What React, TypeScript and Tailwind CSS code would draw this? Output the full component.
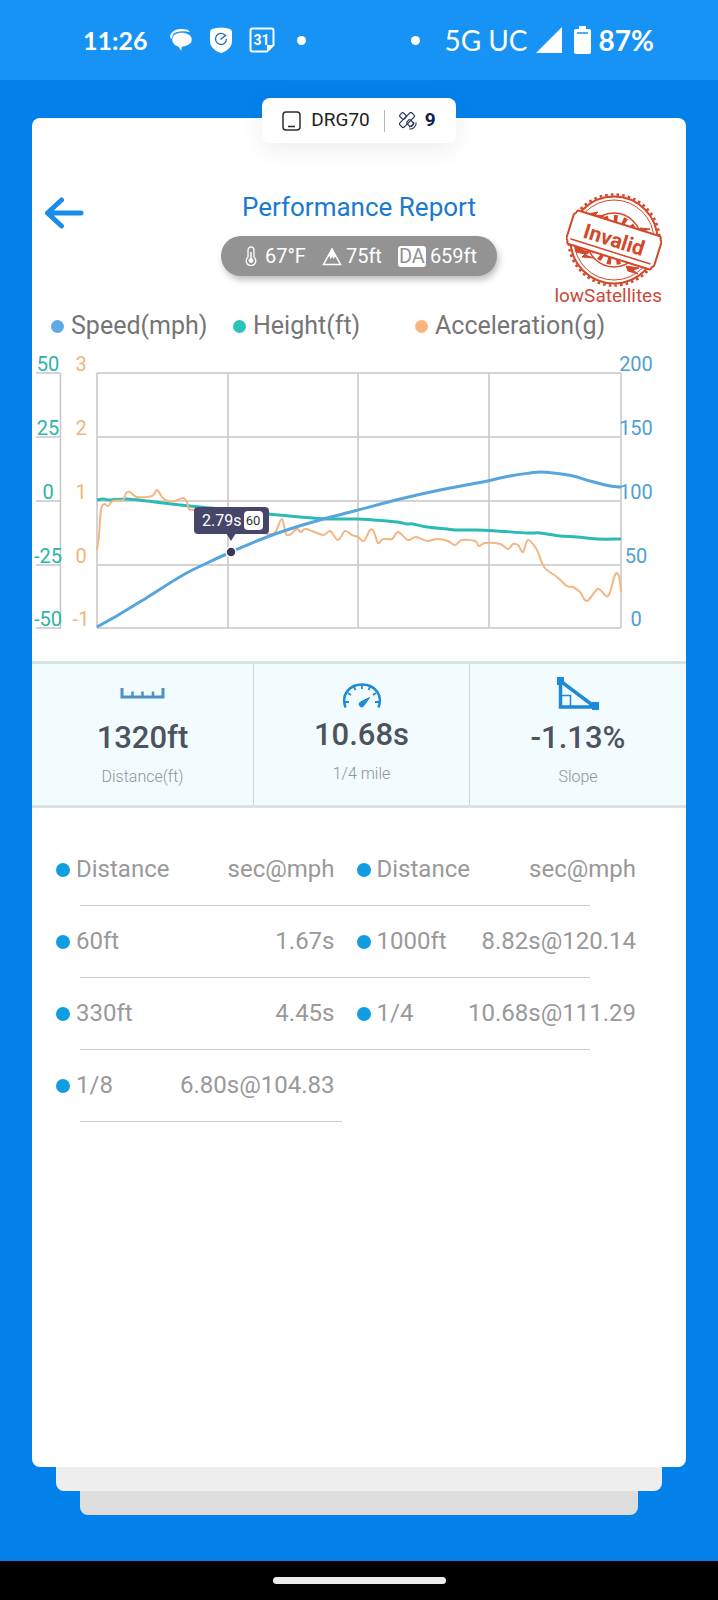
import type { ReactNode } from "react";

type Point = [number, number];

// Curve samples in the chart's own coordinate space.
const SPEED: Point[] = [
  [65, 277], [88, 264], [111, 250], [151, 225], [175, 213], [199, 202], [235, 187], [261, 178],
  [295, 168], [326, 160], [368, 149], [408, 140], [445, 133], [478, 126], [498, 123], [508, 122],
  [521, 123], [541, 126], [558, 131], [578, 136], [589, 137],
];

const HEIGHT: Point[] = [
  [65, 150], [71, 149], [78, 150], [95, 149], [115, 151], [131, 153], [168, 157], [200, 160],
  [236, 164], [268, 167], [295, 169], [326, 169], [341, 170], [365, 172], [375, 174], [381, 174],
  [395, 177], [415, 179], [423, 180], [445, 180], [465, 181], [495, 183], [508, 183], [528, 186],
  [545, 187], [565, 189], [589, 189],
];

const ACCELERATION: Point[] = [
  [65, 200], [67, 185], [69, 160], [72, 154], [76, 156], [81, 151], [91, 150], [94, 143],
  [98, 142], [105, 147], [120, 146], [125, 140], [130, 147], [136, 151], [143, 151], [151, 148],
  [155, 152], [157, 159], [163, 160], [200, 165], [230, 182], [240, 184], [244, 181], [250, 169],
  [254, 184], [259, 184], [265, 179], [269, 182], [274, 179], [291, 185], [298, 181], [306, 190],
  [313, 181], [320, 185], [326, 187], [332, 191], [338, 180], [342, 182], [346, 193], [351, 189],
  [360, 189], [366, 182], [376, 190], [384, 187], [395, 191], [405, 189], [416, 191], [423, 195],
  [430, 190], [443, 191], [447, 196], [453, 193], [468, 194], [476, 199], [481, 194], [486, 195],
  [491, 202], [496, 190], [505, 200], [512, 217], [525, 227], [535, 236], [541, 237], [548, 242],
  [555, 251], [566, 239], [576, 246], [583, 225], [587, 226], [589, 242],
];

const GRID_X = [65, 196, 326, 457, 589];
const GRID_Y = [23, 87, 151, 215, 278];
const AXES = [
  { x: 16, className: "fill-[#2bb5a8]", labels: ["50", "25", "0", "-25", "-50"] },
  { x: 49, className: "fill-[#efb67c]", labels: ["3", "2", "1", "0", "-1"] },
  { x: 604, className: "fill-[#4f9fd0]", labels: ["200", "150", "100", "50", "0"] },
];

const SPLITS = [
  ["60ft", "1.67s", "1000ft", "8.82s@120.14"],
  ["330ft", "4.45s", "1/4", "10.68s@111.29"],
  ["1/8", "6.80s@104.83"],
];

/** Smooth line through the points (Catmull-Rom converted to beziers). */
function smooth(points: Point[]) {
  let d = `M${points[0][0]} ${points[0][1]}`;
  for (let i = 0; i < points.length - 1; i++) {
    const p0 = points[i - 1] ?? points[i];
    const p1 = points[i];
    const p2 = points[i + 1];
    const p3 = points[i + 2] ?? p2;
    d += `C${p1[0] + (p2[0] - p0[0]) / 6} ${p1[1] + (p2[1] - p0[1]) / 6} ${p2[0] - (p3[0] - p1[0]) / 6} ${p2[1] - (p3[1] - p1[1]) / 6} ${p2[0]} ${p2[1]}`;
  }
  return d;
}

function StatusBar() {
  return (
    <div className="flex h-20 items-center justify-between bg-[#1693f5] pr-16 pl-[83px] font-[Lato,sans-serif] text-[28px] leading-8 text-white">
      <div className="flex items-center">
        <span className="text-[25px] font-bold">11:26</span>
        <svg className="ml-[22px] h-6 w-6" viewBox="0 0 24 24" fill="currentColor">
          <path d="M1 8C3 2 8 1 13 1c4 0 7 1 8 3-5-1-9-1-13 0C4 5 3 8 3 11 1 10 1 9 1 8z" />
          <path d="M12.500 4.500c6 0 10.500 3 10.500 7 0 4-4 6.500-10 7.500l-.5 4.500-3-4.500C5 17.500 3 14.500 3 11.500c0-4 4-7 9.500-7z" stroke="#1693f5" strokeWidth="0.500" />
        </svg>
        <svg className="ml-4 h-[26px] w-6" viewBox="0 0 24 26">
          <path d="M3 2Q12-1 21 2l2 2v10c0 6-5 10-11 12C6 24 1 20 1 14V4z" fill="currentColor" />
          <path d="M16.500 8.800A5.500 5.500 0 1 0 17.500 12" fill="none" stroke="#1d6fb8" strokeWidth="1.300" />
          <path d="M11.500 12.500 17 8" stroke="#1d6fb8" strokeWidth="1.500" />
        </svg>
        <svg className="ml-4 h-[26px] w-[26px]" viewBox="0 0 26 26">
          <path d="M3.500 1.500h19q2 0 2 2V18l-6.500 6.500H3.500q-2 0-2-2v-19q0-2 2-2z" fill="none" stroke="currentColor" strokeWidth="2" />
          <path d="M18 24.500V18h6.500z" fill="currentColor" />
          <text x="12.500" y="18" textAnchor="middle" className="fill-white font-[Roboto,sans-serif] text-[14px] font-bold">31</text>
        </svg>
        <span className="ml-[22px] h-[9px] w-[9px] rounded-full bg-white" />
      </div>
      <div className="flex items-center">
        <span className="mr-6 h-[9px] w-[9px] rounded-full bg-white" />
        <span>5G UC</span>
        <svg className="ml-2 h-[26px] w-[26px]" viewBox="0 0 26 26" fill="currentColor">
          <path d="M26 0v26H0z" />
        </svg>
        <svg className="mr-2 ml-3 h-7 w-[17px]" viewBox="0 0 17 28">
          <path d="M5 0h7v3h3q2 0 2 2v21q0 2-2 2H2q-2 0-2-2V5q0-2 2-2h3z" fill="currentColor" />
          <path d="M3 7h11" stroke="#1693f5" strokeWidth="1.500" />
        </svg>
        <span className="font-bold">87%</span>
      </div>
    </div>
  );
}

function DeviceChip() {
  return (
    <div className="mx-auto -mt-5 flex h-[45px] items-center rounded-lg bg-white px-5 text-[19px] text-[#222] shadow-[0_6px_24px_rgba(30,40,80,0.08)]">
      <svg className="h-5 w-[19px]" viewBox="0 0 19 20" fill="none" stroke="#2c2c34" strokeWidth="1.500">
        <rect x="1" y="1" width="17" height="18" rx="3" />
        <path d="M6 15.500h7" />
      </svg>
      <span className="ml-2.5">DRG70</span>
      <span className="mx-[14px] h-[22px] w-px bg-[#b5b5b5]" />
      <svg className="h-[18px] w-[18px]" viewBox="0 0 18 18" fill="none" stroke="#24365f" strokeWidth="1.200">
        <rect x="-2.500" y="-3" width="5" height="6" rx="1.500" transform="translate(4 4) rotate(-45)" />
        <rect x="-2.500" y="-3" width="5" height="6" rx="1.500" transform="translate(11 11) rotate(-45)" />
        <rect x="-3" y="-8.500" width="6" height="17" rx="1.800" transform="translate(8 8) rotate(45)" />
        <path d="M10.500 17.200c3.800 0 6.700-2.700 6.700-6.700M10 14.800c2.800 0 4.800-2 4.800-4.800" />
      </svg>
      <span className="ml-2 font-bold text-[#101c52]">9</span>
    </div>
  );
}

function InvalidStamp() {
  const red = "#d4482a";
  return (
    <svg className="h-24 w-24" viewBox="0 0 96 96" fill="none" stroke={red}>
      <circle cx="48" cy="48" r="45.500" strokeWidth="2.500" strokeDasharray="2.600 3.100" />
      <circle cx="48" cy="48" r="43.500" strokeWidth="2" />
      <circle cx="48" cy="48" r="40" strokeWidth="1" />
      <circle cx="48" cy="48" r="27" strokeWidth="1.500" />
      <circle cx="48" cy="48" r="20" strokeWidth="10" strokeDasharray="3.500 5" />
      <path d="M22 22l10-2-3 3 9 1-8 3 7 3-14-2 3-3zM74 36l10 1-7 2 8 4-13-1zM9 54l12 1-6 3 9 2-5 3 9 3-12-1 3-3-9-2zM60 74l13 2-6 2 5 4-10-3z" fill={red} strokeWidth="1" />
      <g transform="translate(48 48) rotate(17.500)">
        <path d="M-44-15.500q0-2 2-2h84q2 0 2 2c0 2 2 2 2 3v25c0 1-2 1-2 3s-1 2-2 2h-84q-2 0-2-2c0-2-2-2-2-3v-25c0-1 2-1 2-3z" className="fill-white" strokeWidth="2" />
        <path d="M-42 12h84" strokeWidth="1.500" />
        <text y="7" textAnchor="middle" fill={red} stroke="none" className="text-[21px] font-bold">Invalid</text>
      </g>
    </svg>
  );
}

function Header() {
  return (
    <header className="mt-12 grid grid-cols-[1fr_auto_1fr] items-start">
      <button type="button" aria-label="Back" className="mt-1.5 ml-3 w-10 text-[#1b8ce8]">
        <svg className="h-8 w-10" viewBox="0 0 40 32" fill="none" stroke="currentColor" strokeWidth="5" strokeLinecap="round" strokeLinejoin="round">
          <path d="M17.500 3 3.500 16l14 13M4 16h33" />
        </svg>
      </button>
      <div className="flex flex-col items-center">
        <h1 className="text-[26px] leading-8 text-[#1a7ad0]">Performance Report</h1>
        <div className="mt-[13px] flex h-10 items-center rounded-full bg-[#939393] px-5 text-[20px] text-white shadow-[2px_4px_6px_rgba(0,0,0,0.25)]">
          <svg className="ml-1 h-5 w-3" viewBox="0 0 12 20" fill="none" stroke="currentColor">
            <path d="M3 11V4a3 3 0 0 1 6 0v7a4.800 4.800 0 1 1-6 0z" strokeWidth="1.300" />
            <path d="M6 6v8" strokeWidth="1.500" />
            <circle cx="6" cy="14.500" r="2" fill="currentColor" />
          </svg>
          <span className="ml-2">67°F</span>
          <svg className="ml-4 h-[19px] w-5" viewBox="0 0 20 19" fill="none" stroke="currentColor">
            <path d="M10 2 1.500 17.500h17z" strokeWidth="1.500" />
            <path d="M10 1 5.500 10l2-1 1 3 2-2.500 1 2.500 1.500-2.500 1.500 1z" fill="currentColor" stroke="none" />
          </svg>
          <span className="ml-1">75ft</span>
          <span className="ml-4 rounded-[3px] bg-white px-px leading-[21px] text-[#939393]">DA</span>
          <span className="ml-1">659ft</span>
        </div>
      </div>
      <div className="mt-px mr-6 flex flex-col items-end">
        <InvalidStamp />
        <span className="-mt-1 text-[19px] leading-6 text-[#c94a38]">lowSatellites</span>
      </div>
    </header>
  );
}

function LegendItem({ color, label }: { color: string; label: string }) {
  return (
    <li className="flex items-center gap-[7px]">
      <span className={`h-[13px] w-[13px] rounded-full ${color}`} />
      {label}
    </li>
  );
}

function Chart() {
  return (
    <svg className="mt-2 w-full" viewBox="0 0 654 290" fill="none" role="img" aria-label="Speed, height and acceleration over time">
      <g stroke="#c6c6c6" strokeWidth="1.500">
        {GRID_X.map((x) => (
          <path key={x} d={`M${x} 23V278`} />
        ))}
        {GRID_Y.map((y) => (
          <path key={y} d={`M65 ${y}H589M4 ${y}H28`} />
        ))}
        <path d="M28.500 23V279" />
      </g>
      {AXES.map((axis) => (
        <g key={axis.x} textAnchor="middle" className={`text-[20px] ${axis.className}`}>
          {axis.labels.map((label, i) => (
            <text key={label} x={axis.x} y={GRID_Y[i] - 2}>
              {label}
            </text>
          ))}
        </g>
      ))}
      <path d={smooth(HEIGHT)} stroke="#2dbab4" strokeWidth="3" />
      <path d={smooth(ACCELERATION)} stroke="#f2b683" strokeWidth="2" />
      <path d={smooth(SPEED)} stroke="#56a5dc" strokeWidth="3" />

      <rect x="162" y="157" width="75" height="27" rx="4" fill="#47466a" />
      <path d="M194 183h10l-5 8z" fill="#47466a" />
      <text x="170" y="176" className="fill-white text-[16px]">2.79s</text>
      <rect x="212" y="161" width="19" height="19" rx="4" fill="#fff" />
      <text x="221" y="175" textAnchor="middle" className="fill-[#333] text-[13px]">60</text>
      <circle cx="199" cy="202" r="5" fill="#393858" stroke="#fff" strokeWidth="1.500" />
    </svg>
  );
}

function Stat({ icon, value, label }: { icon: ReactNode; value: string; label: string }) {
  return (
    <div className="flex flex-col items-center pt-3 pb-4">
      {icon}
      <p className="mt-2 text-[31px] leading-9 font-medium text-[#4c535e]">{value}</p>
      <p className="mt-[9px] text-base leading-6 font-light text-[#8f9499]">{label}</p>
    </div>
  );
}

function RulerIcon() {
  return (
    <svg className="h-9 w-[45px]" viewBox="0 0 45 36" fill="none" stroke="#4e90c8">
      <path d="M2 12v9h41v-9" strokeWidth="3" />
      <path d="M12.500 15.500v5M22.500 15.500v5M33 15.500v5" strokeWidth="2.500" />
    </svg>
  );
}

function GaugeIcon() {
  return (
    <svg className="h-[33px] w-10" viewBox="0 0 40 33" fill="none" stroke="#1b8ad8">
      <path d="M3.500 31.500C-1.500 17 9 8.500 20 8.500S41.500 17 36.500 31.500" strokeWidth="2.500" />
      <path d="M20 9v4M12 11l1.500 3M28 11l-1.500 3M6 17l3 2M34 17l-3 2M3 26h4M37 26h-4" strokeWidth="1.800" />
      <path d="M27.500 21.500 22 29.500a2.600 2.600 0 1 1-3.500-3.500z" fill="#1b8ad8" strokeWidth="1" />
    </svg>
  );
}

function SlopeIcon() {
  return (
    <svg className="h-9 w-[42px]" viewBox="0 0 42 36" fill="none" stroke="#1b8ad8">
      <path d="M3.500 5v26H38z" strokeWidth="3.500" />
      <path d="M5 19.500h8.500V30" strokeWidth="1.500" />
      <path d="M0 1h7v8H0zM35 26h7v8h-7z" fill="#1b8ad8" stroke="none" />
    </svg>
  );
}

function Dot() {
  return <span className="h-[14px] w-[14px] shrink-0 rounded-full bg-[#109de2]" />;
}

const rowClass =
  "grid grid-cols-[110px_minmax(0,1fr)_133px_minmax(0,1fr)] after:col-span-4 after:ml-6 after:h-px after:bg-[#cdcdcd]";
const labelClass = "flex items-center gap-1.5 text-left leading-[71px] font-normal";
const valueClass = "text-right leading-[71px] font-normal whitespace-nowrap";

function SplitTable() {
  return (
    <table className="mt-[26px] mr-[50px] ml-6 block text-[24px] text-[#999]">
      <thead className="block">
        <tr className={`${rowClass} after:mr-[46px]`}>
          <th className={labelClass}><Dot />Distance</th>
          <th className={valueClass}>sec@mph</th>
          <th className={`${labelClass} pl-[22px]`}><Dot />Distance</th>
          <th className={valueClass}>sec@mph</th>
        </tr>
      </thead>
      <tbody className="block">
        {SPLITS.map(([distance, time, distance2, time2]) => (
          <tr key={distance} className={`${rowClass} ${distance2 ? "after:mr-[46px]" : "after:mr-[294px]"}`}>
            <td className={labelClass}><Dot />{distance}</td>
            <td className={valueClass}>{time}</td>
            {distance2 && (
              <>
                <td className={`${labelClass} pl-[22px]`}><Dot />{distance2}</td>
                <td className={valueClass}>{time2}</td>
              </>
            )}
          </tr>
        ))}
      </tbody>
    </table>
  );
}

export default function App() {
  return (
    <div className="flex min-h-screen flex-col bg-[#0381ea] font-[Roboto,sans-serif]">
      <StatusBar />
      <main className="flex flex-1 flex-col px-8 pt-[38px] pb-[46px]">
        <div className="flex flex-1 flex-col rounded-lg bg-white">
          <DeviceChip />
          <Header />
          <ul className="mt-0.5 ml-[19px] grid grid-cols-[182px_182px_auto] text-[25px] leading-8 text-[#757575]">
            <LegendItem color="bg-[#5aabe8]" label="Speed(mph)" />
            <LegendItem color="bg-[#2ac4bd]" label="Height(ft)" />
            <LegendItem color="bg-[#fab57d]" label="Acceleration(g)" />
          </ul>
          <Chart />
          <section className="mt-[21px] grid grid-cols-[222fr_216fr_216fr] divide-x divide-[#cbdadf] border-y-[3px] border-[#d8e3e4] bg-[#f2fbfd]">
            <Stat icon={<RulerIcon />} value="1320ft" label="Distance(ft)" />
            <Stat icon={<GaugeIcon />} value="10.68s" label="1/4 mile" />
            <Stat icon={<SlopeIcon />} value="-1.13%" label="Slope" />
          </section>
          <SplitTable />
        </div>
        <div className="mx-6 h-6 rounded-b-lg bg-[#eee]" />
        <div className="mx-12 h-6 rounded-b-lg bg-[#ddd]" />
      </main>
      <div className="flex h-[39px] items-center justify-center bg-black">
        <div className="h-[7px] w-[173px] rounded-full bg-[#ececec]" />
      </div>
    </div>
  );
}
